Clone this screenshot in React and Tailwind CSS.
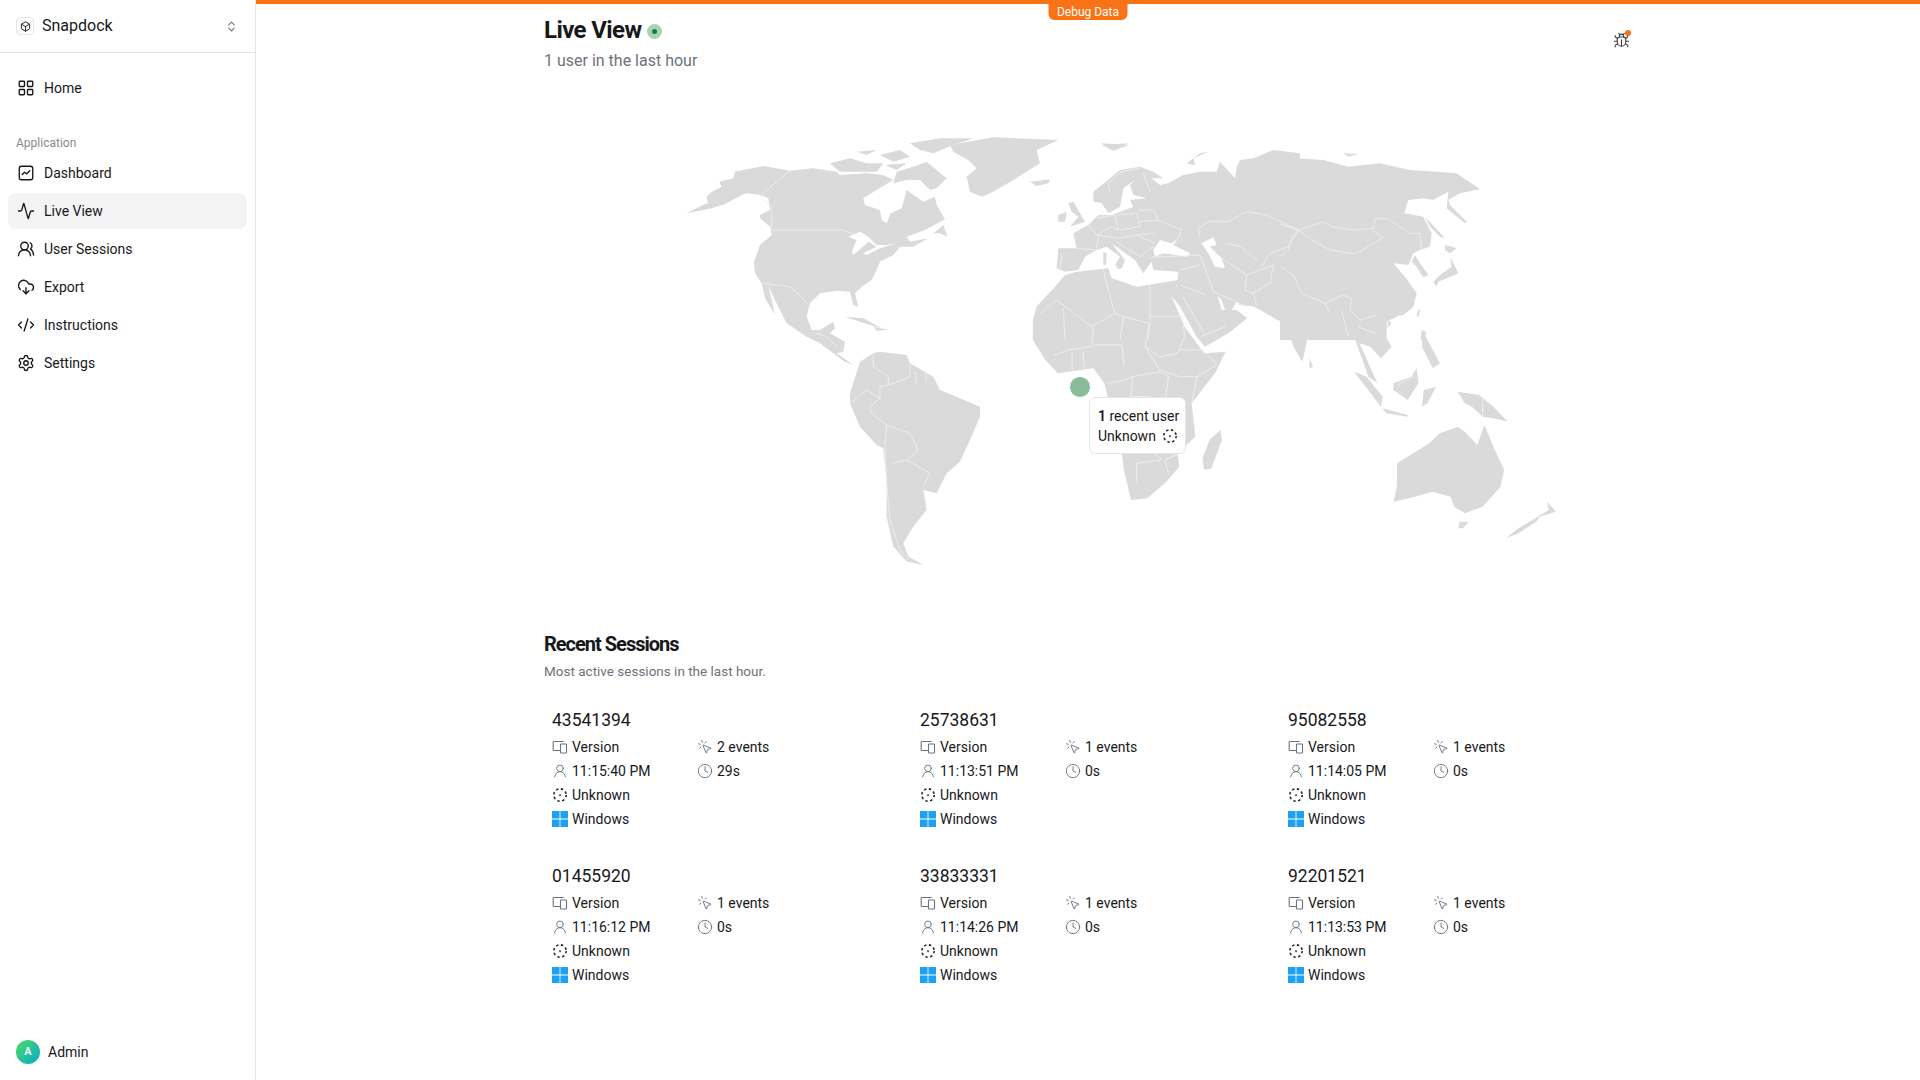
import { LayoutGrid, Activity, UsersRound, CloudDownload, CodeXml, Settings, ChevronsUpDown, Box, Bug, MousePointerClick, UserRound, Clock } from 'lucide-react'

const SESSIONS = [
  { id: '43541394', time: '11:15:40 PM', events: 2, duration: '29s' },
  { id: '25738631', time: '11:13:51 PM', events: 1, duration: '0s' },
  { id: '95082558', time: '11:14:05 PM', events: 1, duration: '0s' },
  { id: '01455920', time: '11:16:12 PM', events: 1, duration: '0s' },
  { id: '33833331', time: '11:14:26 PM', events: 1, duration: '0s' },
  { id: '92201521', time: '11:13:53 PM', events: 1, duration: '0s' },
]

// map outlines are traced per region, each region has its own transform
const MAP_REGIONS = [
  {
    // north america
    transform: 'translate(680 130) scale(0.3333)',
    land: [
      '20,250 85,225 80,200 95,185 125,170 118,155 160,145 165,125 250,108 330,122 400,115 470,125 480,135 560,130 610,135 640,150 590,180 550,205 555,225 600,240 605,270 620,280 632,250 665,235 680,180 730,215 765,200 770,225 795,268 735,300 680,320 690,335 745,325 700,350 660,350 640,375 600,395 590,420 575,450 545,470 525,490 535,530 520,525 510,485 470,482 420,490 390,520 380,560 395,600 420,600 460,575 465,595 450,610 495,635 490,665 470,670 520,705 495,695 460,670 420,640 380,620 320,580 315,570 280,500 265,465 285,555 255,505 245,460 225,430 222,395 240,345 275,315 270,290 240,265 240,255 270,240 265,205 240,195 200,190 185,195 130,225 85,225',
      '20,250 75,222 130,212 135,222 90,236',
      '450,100 510,85 560,100 610,100 590,125 480,125',
      '530,65 590,60 560,75',
      '600,75 660,60 690,80 640,95',
      '690,40 780,25 880,25 820,45 760,70 720,60',
      '650,125 700,110 740,95 800,145 770,175 750,180 720,150 680,150 640,160',
      '615,105 680,100 650,120',
      '760,310 790,285 803,320 780,310',
    ],
    water: ['505,320 540,305 565,320 590,345 620,345 650,340 600,355 560,375 550,370 590,350 565,335 555,345 520,375 515,365 530,330'],
    borders: [
      '330,122 240,198 275,235 275,300',
      '275,300 490,300 540,320',
      '250,460 330,470 360,495 385,525',
    ],
  },
  {
    // south america, caribbean, greenland
    transform: 'translate(660 120) scale(0.3333)',
    land: [
      '640,700 600,725 570,820 570,850 600,920 650,975 670,985 680,1080 680,1190 700,1280 740,1325 790,1335 745,1310 730,1270 760,1220 800,1170 790,1110 830,1120 860,1060 900,1025 930,960 960,890 960,860 900,835 840,810 820,770 750,730 740,705 660,695',
      '870,75 1000,52 1195,60 1130,90 1140,130 1060,180 1000,215 965,230 930,215 920,170 950,145 925,120 880,95',
      '1110,185 1170,178 1165,190 1130,198',
      '555,590 610,595 665,625 630,615',
      '640,620 685,630 650,632',
      '1325,75 1405,70 1360,92',
    ],
    water: [],
    borders: [
      '470,640 500,650 530,680',
      '640,700 640,740 685,770 685,795 660,800 660,835 630,860 635,880 680,915 750,940 775,990 740,1020 810,1060 790,1100',
      '570,850 620,810 660,835',
      '685,795 750,770 750,730',
      '770,790 765,755',
      '800,785 795,750',
      '680,915 675,985 680,1090 690,1200 720,1290 745,1320',
      '695,1030 740,1020',
    ],
  },
  {
    // africa, south asia, oceania
    transform: 'translate(1040 120) scale(0.357 0.3333)',
    land: [
      '388,480 271,500 201,475 191,445 103,455 70,465 42,500 -10,560 -20,600 -20,660 15,720 50,760 150,745 180,790 190,830 225,960 235,1050 255,1140 300,1135 350,1090 390,1040 385,1000 435,950 425,850 490,760 520,695 460,700 405,620 369,530',
      '600,560 665,600 690,610 710,680 735,725 750,650 800,600 840,590 880,650 900,710 920,770 945,790 895,670 925,680 955,715 985,680 950,620 960,610 1000,590 1000,450 600,400',
      '505,930 510,960 480,1045 460,1050 455,1015 475,960',
      '755,715 765,740 755,745',
      '1070,630 1120,730 1100,745 1070,680',
      '1055,745 1060,790 1030,840 990,810 990,790 1040,770',
      '880,755 915,770 960,830 955,860',
      '960,865 1030,885 1030,890 970,880',
      '1075,810 1110,800 1085,850 1070,860',
      '1170,815 1230,825 1270,860 1310,905 1270,895 1240,890 1210,860 1190,850',
      '1000,1030 1090,970 1120,940 1170,920 1190,935 1225,975 1245,915 1270,980 1300,1050 1290,1100 1240,1160 1190,1180 1160,1160 1150,1130 1100,1115 1050,1130 990,1145 1000,1100',
      '1175,1205 1200,1205 1185,1225 1172,1225',
      '1420,1145 1445,1175 1400,1190 1390,1205 1340,1240 1305,1255 1340,1225 1380,1200 1425,1170',
      '170,70 250,75 210,90',
    ],
    water: [],
    borders: [
      '150,620 145,680 80,690 40,705',
      '150,675 230,675',
      '305,612 295,680 335,750',
      '400,590 405,650 385,700 335,710 295,680',
      '230,675 235,740',
      '390,690 460,690 495,735 440,770 390,770 335,750',
      '440,770 425,850',
      '190,790 240,780 260,770 335,755 360,770 350,850 390,900',
      '260,770 255,830 310,830',
      '230,980 310,985 340,1020 270,1030 270,1085',
      '390,1000 350,1020 360,1060',
      '90,700 90,750',
      '120,695 125,750',
      '890,620 940,640',
      '400,530 460,640',
      '450,650 520,620',
      '1240,835 1240,890',
      '1000,795 1050,770',
    ],
  },
  {
    // europe, middle east, central asia
    transform: 'translate(1040 150) scale(0.3333)',
    land: [
      '160,125 210,85 240,60 300,50 340,65 370,85 335,85 360,105 385,100 430,75 480,65 530,65 540,35 585,85 590,50 600,30 640,25 700,0 780,10 780,570 745,560 730,510 690,475 650,470 600,465 590,455 575,480 555,480 545,450 520,425 530,430 545,480 590,480 622,505 590,530 565,550 495,590 470,560 420,470 385,425 410,410 415,365 340,360 335,335 310,370 285,330 250,305 215,280 255,330 245,355 225,345 240,320 200,290 170,300 135,320 115,360 75,365 50,355 55,295 110,295 100,250 145,225 175,195 195,195 215,195 280,170 270,150 320,145 280,135 270,105 285,90 250,115 240,170 205,190 185,160 160,155',
      '85,160 100,155 135,215 90,230 115,200 95,185',
      '55,195 80,185 75,215 55,215',
      '440,40 480,10 505,5 460,25 465,45',
      '190,305 200,310 198,345 190,345',
      '225,350 248,350 240,358',
    ],
    water: [
      '340,300 360,270 395,280 415,265 400,285 450,310 440,320 370,310 345,320',
      '485,280 520,262 530,285 510,290 545,325 555,355 525,350 505,310',
    ],
    borders: [
      '210,130 205,100 245,65 300,55',
      '310,70 330,125',
      '300,215 355,210 425,240 415,265',
      '295,180 340,180 355,210',
      '170,205 225,195 235,240 215,230 170,255',
      '230,195 290,190 300,230 240,240',
      '145,225 175,260 170,295',
      '110,295 170,300',
      '65,310 60,355',
      '170,255 235,265 290,255 345,250',
      '230,275 285,310 300,320 340,290',
      '290,255 345,280',
      '335,322 480,315',
      '420,360 480,345',
      '420,405 500,435',
      '480,315 520,425 620,470',
      '620,375 615,420 640,430 650,465',
      '620,375 700,345 690,400 640,430',
      '475,235 505,215 565,215 620,185 680,195 775,240 745,290 690,310 665,350',
      '560,280 600,290 650,330',
      '540,320 620,375',
      '475,235 480,265',
      '50,450 155,530 225,490 205,420 190,360',
      '70,475 75,570',
      '225,490 250,500 330,520 330,405',
      '330,500 430,500',
      '0,490 50,450',
      '250,500 240,570',
      '330,520 325,570',
    ],
  },
  {
    // russia, china, japan
    transform: 'translate(1280 150) scale(0.3333)',
    land: [
      '0,5 50,10 50,25 130,30 205,50 300,40 390,60 470,65 530,70 600,118 540,130 505,150 510,165 560,215 555,220 500,175 505,125 460,150 430,145 385,150 373,190 430,200 455,250 450,290 420,300 400,310 385,345 340,340 375,380 410,430 400,470 370,495 340,500 320,510 320,570 0,570',
      '405,315 420,340 445,375 430,382 410,350 395,335',
      '510,320 535,370 500,385 475,395 470,410 460,395 480,375 515,350',
      '495,285 530,295 510,310 495,300',
      '435,200 495,265 480,260 450,230',
      '415,478 420,480 416,500 410,498',
      '325,510 335,520 322,535',
      '425,540 438,545 435,570 422,570',
      '190,10 235,12 205,20',
    ],
    water: [],
    borders: [
      '0,222 55,240 130,215 160,232 220,240 280,235 285,205 320,205 390,250 420,250 425,300',
      '55,240 95,270 150,300 225,312 265,290 310,262 275,240',
      '0,350 40,375 65,430 135,460 190,435 215,445 210,480 240,510 290,495',
      '135,460 150,490',
      '185,480 205,560',
      '55,240 35,265 25,300 0,320',
    ],
  },
]

const NAV = [
  { label: 'Dashboard', icon: DashboardIcon },
  { label: 'Live View', icon: Activity, active: true },
  { label: 'User Sessions', icon: UsersRound },
  { label: 'Export', icon: CloudDownload },
  { label: 'Instructions', icon: CodeXml },
  { label: 'Settings', icon: Settings },
]

function DashboardIcon(props) {
  return (
    <svg viewBox="0 0 24 24" fill="none" stroke="currentColor" strokeWidth="2" strokeLinecap="round" strokeLinejoin="round" {...props}>
      <rect x="3" y="3" width="18" height="18" rx="3" />
      <path d="M7 14l3-3 3 2 4-4" />
    </svg>
  )
}

function DevicesIcon() {
  return (
    <svg viewBox="0 0 16 16" fill="none" stroke="#6b7280" strokeWidth="1.1" className="w-4 h-4 shrink-0">
      <path d="M11 3V2.5H2a.8.8 0 0 0-.8.8v7.4c0 .5.3.8.8.8h6" />
      <rect x="8.5" y="5" width="6" height="9" rx="0.8" />
    </svg>
  )
}

function UnknownIcon() {
  return (
    <svg viewBox="0 0 16 16" fill="none" className="w-4 h-4 shrink-0">
      <circle cx="8" cy="8" r="6.2" stroke="#27272a" strokeWidth="1.6" strokeDasharray="2.4 2.5" />
      <path d="M6.6 7.4h2.8L8 9.4z" fill="#27272a" />
    </svg>
  )
}

function WindowsIcon() {
  return (
    <svg viewBox="0 0 16 16" className="w-4 h-4 shrink-0">
      <path d="M0 0h7.6v7.6H0zM8.4 0H16v7.6H8.4zM0 8.4h7.6V16H0zM8.4 8.4H16V16H8.4z" fill="#1ea1f1" />
    </svg>
  )
}

function WorldMap() {
  return (
    <svg viewBox="660 120 940 460" className="w-[940px] h-[460px]">
      {MAP_REGIONS.map((region) => (
        <g key={region.transform} transform={region.transform}>
          {region.land.map((points) => <polygon key={points} points={points} fill="#dadada" />)}
          {region.water.map((points) => <polygon key={points} points={points} fill="#fff" />)}
        </g>
      ))}
      {MAP_REGIONS.map((region) => (
        <g key={region.transform} transform={region.transform}>
          {region.borders.map((points) => <polyline key={points} points={points} fill="none" stroke="#f1f1f1" strokeWidth="2.5" />)}
        </g>
      ))}
    </svg>
  )
}

function SessionCard({ session }) {
  return (
    <div className="p-2 text-sm text-[#18181b] h-[140px]">
      <div className="text-[17.5px] leading-[22px] mb-[3px] -mt-[1px] pb-[1px]">{session.id}</div>
      <div className="grid grid-cols-[145px_1fr]">
        <div className="flex flex-col">
          <div className="flex items-center gap-1 h-6"><DevicesIcon />Version</div>
          <div className="flex items-center gap-1 h-6"><UserRound size={16} strokeWidth={1.4} className="text-gray-500" />{session.time}</div>
          <div className="flex items-center gap-1 h-6"><UnknownIcon />Unknown</div>
          <div className="flex items-center gap-1 h-6"><WindowsIcon />Windows</div>
        </div>
        <div className="flex flex-col">
          <div className="flex items-center gap-1 h-6"><MousePointerClick size={16} strokeWidth={1.4} className="text-gray-500" />{session.events} events</div>
          <div className="flex items-center gap-1 h-6"><Clock size={16} strokeWidth={1.4} className="text-gray-500" />{session.duration}</div>
        </div>
      </div>
    </div>
  )
}

export default function App() {
  return (
    <div className="flex h-screen overflow-hidden bg-white text-[#18181b] font-['Roboto','Noto_Sans',sans-serif]">
      {/* Sidebar */}
      <aside className="w-[256px] shrink-0 flex flex-col border-r border-[#e5e5e5]">
        <div className="h-[53px] flex items-center px-4 border-b border-[#e5e5e5]">
          <div className="w-[18px] h-[18px] border border-[#e5e5e5] rounded flex items-center justify-center">
            <Box size={11} />
          </div>
          <span className="ml-2 text-base">Snapdock</span>
          <ChevronsUpDown size={13} className="ml-auto mr-[1px] text-gray-500" />
        </div>
        <nav className="flex-1 px-2 text-sm">
          <div className="flex items-center gap-[9px] h-9 px-[9px] mt-[17px]">
            <LayoutGrid className="w-[18px] h-[18px]" strokeWidth={1.8} />
            Home
          </div>
          <div className="text-xs text-[#8a8a8a] px-2 mt-[28px] h-[17px] flex items-center mb-[4px]">Application</div>
          <div className="flex flex-col gap-[2px]">
            {NAV.map(({ label, icon: Icon, active }) => (
              <div key={label} className={`flex items-center gap-[9px] h-9 px-[9px] rounded-lg ${active ? 'bg-[#f4f4f5]' : ''}`}>
                <Icon className="w-[18px] h-[18px]" strokeWidth={1.8} />
                {label}
              </div>
            ))}
          </div>
        </nav>
        <div className="h-[56px] flex items-center px-4 gap-2 text-sm">
          <div className="w-6 h-6 rounded-full bg-gradient-to-br from-[#4ade50] to-[#0ea5c9] text-white text-[11px] font-semibold flex items-center justify-center">A</div>
          Admin
        </div>
      </aside>

      {/* Main */}
      <main className="relative flex-1 border-t-4 border-[#f97316]">
        <div className="absolute top-0 left-1/2 -translate-x-1/2 w-[79px] h-[16px] bg-[#f97316] rounded-b-md text-white text-xs leading-[16px] text-center">
          Debug Data
        </div>
        <div className="w-[1088px] mx-auto">
          <div className="flex justify-between items-start h-[116px] pt-[11px]">
            <div>
              <div className="flex items-center gap-[6px]">
                <h1 className="text-2xl font-bold tracking-tight leading-[30px]">Live View</h1>
                <span className="w-[15px] h-[15px] rounded-full bg-[#a9d3b6] flex items-center justify-center mt-[2px]">
                  <span className="w-[5px] h-[5px] rounded-full bg-[#15803d]" />
                </span>
              </div>
              <p className="text-base text-[#71717a] mt-[4px]">1 user in the last hour</p>
            </div>
            <div className="relative mt-[17px] mr-[2px]">
              <Bug size={17} strokeWidth={1.5} className="text-[#3f3f46]" />
              <span className="absolute -top-[2px] -right-[1px] w-[6px] h-[6px] rounded-full bg-[#f97316]" />
            </div>
          </div>

          {/* Map */}
          <div className="relative h-[460px] ml-[116px]">
            <WorldMap />
            <div className="absolute left-[409px] top-[256px] w-[22px] h-[22px] rounded-full bg-[#8abc9c] border border-white" />
            <div className="absolute left-[429px] top-[277px] w-[97px] h-[57px] bg-white border border-[#e5e5e5] rounded-md px-2 py-2 text-sm leading-5">
              <div className="whitespace-nowrap"><span className="font-semibold">1</span> recent user</div>
              <div className="flex items-center gap-[6px]">Unknown <UnknownIcon /></div>
            </div>
          </div>

          {/* Recent sessions */}
          <h2 className="text-xl font-bold tracking-tighter leading-7 mt-[50px]">Recent Sessions</h2>
          <p className="text-[13.5px] text-[#71717a] mt-[3px] leading-5">Most active sessions in the last hour.</p>
          <div className="grid grid-cols-3 gap-x-4 gap-y-4 mt-[21px]">
            {SESSIONS.map((session) => <SessionCard key={session.id} session={session} />)}
          </div>
        </div>
      </main>
    </div>
  )
}
